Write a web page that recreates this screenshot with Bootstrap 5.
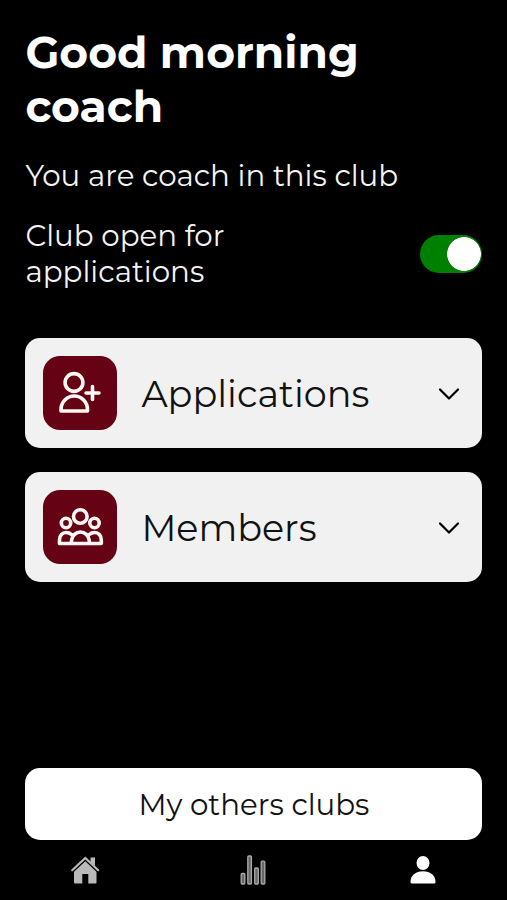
<!DOCTYPE html>
<html lang="en">
<head>
<meta charset="utf-8">
<meta name="viewport" content="width=device-width, initial-scale=1">
<title>Club</title>
<link href="https://cdn.jsdelivr.net/npm/bootstrap@5.3.0/dist/css/bootstrap.min.css" rel="stylesheet">
<style>
body{background:#000;color:#fff;font-family:Montserrat,Inter,"Open Sans",sans-serif;height:900px;overflow:hidden}
.screen{height:840px;padding:25px 24.600px 0 25.400px}
.greeting{font-size:44px;line-height:54px;font-weight:700;margin:0 0 25px}
.copy{font-size:29.3px;line-height:36px;font-weight:400;color:#f4f4f4}
.role{margin-bottom:25px;height:35px;line-height:35px}
.open-row{height:72px;margin-bottom:48.400px}
.open-label{width:250px}
.club-switch{padding:0;min-height:0;margin:0}
.club-switch .form-check-input{width:62px;height:38px;margin:0;float:none;display:block;border:0;border-radius:19px;background-color:#008000;background-image:radial-gradient(circle at center,#fff 16.5px,transparent 17.2px);background-size:36px 38px;background-position:right 1px center;box-shadow:none}
.panel{height:110px;border-radius:15px;background:#f1f1f1;color:#000;border:0;padding:0 22px 0 18px;font-size:36.6px;font-weight:400;text-align:left}
.tile{width:74px;height:74px;border-radius:17px;background:#650314}
.panel-title{margin-left:24px;padding-top:2px;color:#111}
.chevron{margin-top:1px}
.others{height:72px;border-radius:15px;background:#fff;color:#111;border:0;font-size:29.3px;font-weight:400;padding:1px 0 0}
.others:hover{background:#eee}
.tabs{height:60px}
.tabs a{line-height:0}
</style>
</head>
<body>
<div class="screen d-flex flex-column">
  <h1 class="greeting">Good morning<br>coach</h1>
  <p class="copy role">You are coach in this club</p>
  <div class="open-row d-flex align-items-center justify-content-between">
    <label class="copy open-label" for="open"><span class="text-nowrap">Club open for</span><br>applications</label>
    <div class="form-check form-switch club-switch"><input class="form-check-input" type="checkbox" role="switch" id="open" checked></div>
  </div>
  <div class="d-flex flex-column gap-4">
    <button class="panel d-flex align-items-center w-100" type="button">
      <span class="tile d-flex flex-shrink-0">
        <svg width="74" height="74" viewBox="0 0 74 74" fill="none" stroke="#fff8f4" stroke-width="3.6" stroke-linecap="round" stroke-linejoin="round"><circle cx="31" cy="26.5" r="8.9"/><path d="M18 55v-1.500a13.200 13.500 0 0 1 26.500 0V55zM49.500 30.500v13M43 37h13"/></svg>
      </span>
      <span class="panel-title">Applications</span>
      <svg class="chevron ms-auto" width="22" height="14" viewBox="0 0 22 14" fill="none" stroke="#000" stroke-width="2.2" stroke-linecap="round" stroke-linejoin="round"><path d="m2 2.500 9 9 9-9"/></svg>
    </button>
    <button class="panel d-flex align-items-center w-100" type="button">
      <span class="tile d-flex flex-shrink-0">
        <svg width="74" height="74" viewBox="0 0 74 74" fill="none" stroke="#fff8f4" stroke-width="3.6" stroke-linecap="round" stroke-linejoin="round"><circle cx="37.300" cy="26.500" r="6.800"/><circle cx="23" cy="33" r="4.700"/><circle cx="51.500" cy="33" r="4.700"/><path d="M28.500 53.500v-3a9 10 0 0 1 17.800 0v3zM28.500 53.500H16.500V50c0-4.500 3-7.500 6.500-7.500 2.500 0 4.200.8 5.500 2M46.300 53.500h12V50c0-4.500-3-7.500-6.500-7.500-2.500 0-4.200.8-5.500 2"/></svg>
      </span>
      <span class="panel-title">Members</span>
      <svg class="chevron ms-auto" width="22" height="14" viewBox="0 0 22 14" fill="none" stroke="#000" stroke-width="2.2" stroke-linecap="round" stroke-linejoin="round"><path d="m2 2.500 9 9 9-9"/></svg>
    </button>
  </div>
  <button class="others w-100 mt-auto flex-shrink-0" type="button">My others clubs</button>
</div>
<nav class="tabs row g-0 align-items-center text-center">
  <a class="col" href="#" aria-label="Home"><svg width="30" height="30" viewBox="0 0 30 30" fill="#b9b9b9"><path d="M20.500 2.500H25V11l-4.500-4z"/><path d="M4 16 15.300 5.800 26.500 16v11.500a1 1 0 0 1-1 1H18.300v-9.500h-6v9.500H5a1 1 0 0 1-1-1z"/><path d="M2.500 17.200 15.300 5.300l12.700 11.900" fill="none" stroke="#000" stroke-width="1.400"/><path d="M2.200 15.200 15.300 3l12.900 12.200" fill="none" stroke="#b9b9b9" stroke-width="2.200" stroke-linecap="round"/></svg></a>
  <a class="col" href="#" aria-label="Statistics"><svg width="30" height="30" viewBox="0 0 30 30" fill="#666" stroke="#aaa" stroke-width="1.300"><rect x="2.200" y="18.500" width="3.600" height="10.500" rx="1"/><rect x="8.800" y="1" width="3.600" height="28" rx="1"/><rect x="15.700" y="13" width="3.600" height="16" rx="1"/><rect x="22.200" y="6.200" width="3.600" height="22.800" rx="1"/></svg></a>
  <a class="col" href="#" aria-label="Profile"><svg width="30" height="30" viewBox="0 0 30 30" fill="#fff"><ellipse cx="15" cy="8" rx="6.500" ry="6.900"/><path d="M2.500 27c0-6.700 5-10.800 12.500-10.800S27.500 20.300 27.500 27c0 1-.4 1.400-1.200 1.400H3.700c-.8 0-1.200-.4-1.200-1.400z"/></svg></a>
</nav>
<script src="https://cdn.jsdelivr.net/npm/bootstrap@5.3.0/dist/js/bootstrap.bundle.min.js"></script>
</body>
</html>
